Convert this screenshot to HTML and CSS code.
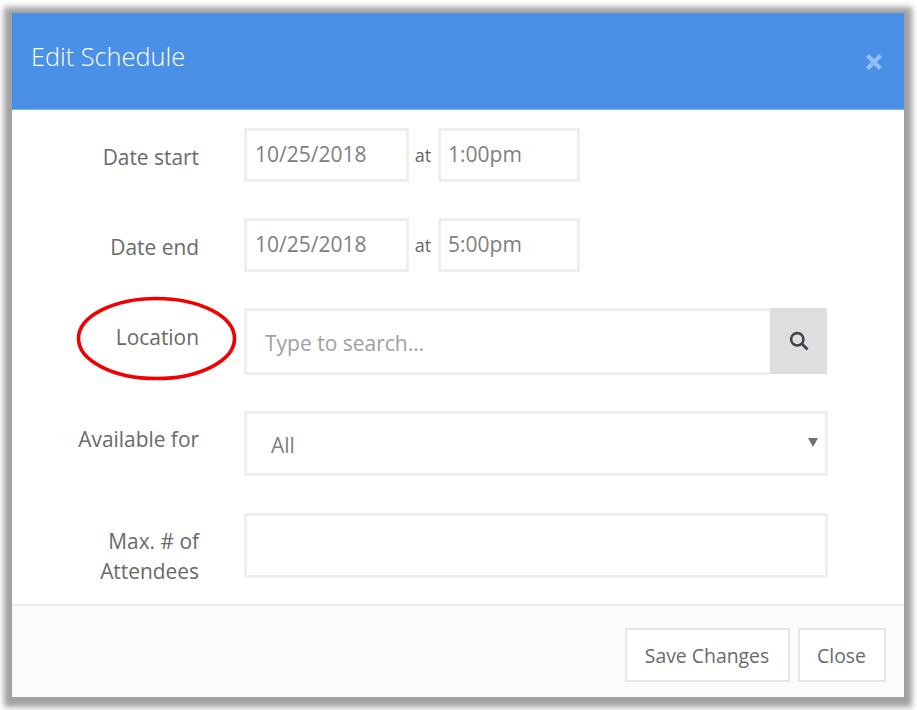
FILE: index.html
```html
<!DOCTYPE html>
<html lang="en">
<head>
<meta charset="utf-8">
<title>Edit Schedule</title>
<link rel="stylesheet" href="styles.css">
</head>
<body>
<div class="modal">
  <header class="modal-header">
    <h1 class="modal-title">Edit Schedule</h1>
    <svg class="close-x" width="18" height="18" viewBox="0 0 18 18" aria-hidden="true"><path d="M2.5 2.5L15.5 15.5M15.5 2.5L2.5 15.5" stroke="#94bdf3" stroke-width="4.2" fill="none"/></svg>
  </header>
  <form class="modal-body">
    <div class="row row-date">
      <label class="label">Date start</label>
      <div class="controls">
        <input class="field field-date" value="10/25/2018">
        <span class="at">at</span>
        <input class="field field-time" value="1:00pm">
      </div>
    </div>
    <div class="row row-date">
      <label class="label">Date end</label>
      <div class="controls">
        <input class="field field-date" value="10/25/2018">
        <span class="at">at</span>
        <input class="field field-time" value="5:00pm">
      </div>
    </div>
    <div class="row row-location">
      <label class="label label-location">Location</label>
      <div class="controls">
        <input class="field field-search" placeholder="Type to search...">
        <span class="search-btn">
          <svg width="20" height="20" viewBox="0 0 20 20" aria-hidden="true"><circle cx="8.3" cy="8.3" r="6.2" stroke="#3f444a" stroke-width="2.6" fill="none"/><path d="M12.8 12.8L18.6 18.4" stroke="#3f444a" stroke-width="2.8" fill="none"/></svg>
        </span>
      </div>
    </div>
    <div class="row row-select">
      <label class="label label-select">Available for</label>
      <div class="controls select-wrap">
        <select class="field field-select"><option>All</option></select>
        <span class="caret"></span>
      </div>
    </div>
    <div class="row row-max">
      <label class="label label-max">Max. # of<br>Attendees</label>
      <div class="controls">
        <input class="field field-wide">
      </div>
    </div>
    <svg class="highlight" width="163" height="87" viewBox="0 0 163 87" aria-hidden="true"><ellipse cx="81.5" cy="42.5" rx="78" ry="40" stroke="#f00000" stroke-width="3.6" fill="none"/></svg>
  </form>
  <footer class="modal-footer">
    <button class="btn btn-save" type="button">Save Changes</button>
    <button class="btn btn-close" type="button">Close</button>
  </footer>
</div>
</body>
</html>
```

FILE: styles.css
```css
* { box-sizing: border-box; }

html, body { margin: 0; height: 100%; background: #fff; }

body {
  padding: 13px 13px 13px 12px;
  font-family: "Open Sans", "Liberation Sans", sans-serif;
  color: #666;
  overflow: hidden;
}

.modal {
  position: relative;
  width: 892px;
  height: 684px;
  display: flex;
  flex-direction: column;
  background: #fff;
  box-shadow: 0 2px 6px 8px #a0a0a0;
}

.modal-header {
  height: 97px;
  flex: none;
  background: #4a90e6;
  border-bottom: 1px solid #7eb0f0;
  display: flex;
  justify-content: space-between;
  padding: 0 21px 0 19px;
}

.modal-title {
  margin: 25px 0 0;
  font-size: 25.3px;
  line-height: 36px;
  font-weight: 300;
  color: #fff;
}

.close-x { margin-top: 40px; }

.modal-body {
  position: relative;
  flex: 1;
  min-height: 0;
  padding: 18px 0 0;
}

.row {
  display: grid;
  grid-template-columns: 187px 584px;
  column-gap: 45px;
  margin-bottom: 36px;
}

.row-select { margin-bottom: 37px; }
.row-max { margin-bottom: 0; }

.label {
  text-align: right;
  font-size: 20.9px;
  line-height: 30px;
  color: #6a6a6a;
  padding-top: 14px;
}

.label-location { padding-top: 14px; }
.label-select { padding-top: 13px; }
.label-max { padding-top: 13px; }

.controls {
  display: flex;
  align-items: stretch;
  position: relative;
}

.field {
  border: 3px solid #efefef;
  background: #fff;
  color: #808080;
  font-family: inherit;
  font-size: 21px;
  outline: none;
  margin: 0;
  border-radius: 0;
}

.field::placeholder { color: #a0a0a0; opacity: 1; }

.row-date .field { height: 54px; padding: 0 8px 3px; }
.row-date .field-time { padding-left: 7px; }
.field-date { width: 165px; }
.field-time { width: 142px; }

.at {
  width: 29px;
  padding-right: 1px;
  text-align: center;
  font-size: 18px;
  line-height: 54px;
  color: #666;
}

.field-search {
  width: 526px;
  height: 67px;
  padding: 2px 18px 0;
  border-right: 0;
}

.search-btn {
  width: 57px;
  height: 66px;
  background: #dedede;
  display: flex;
  align-items: center;
  justify-content: center;
}

.field-select {
  width: 584px;
  height: 65px;
  padding: 2px 24px 0;
  appearance: none;
  -webkit-appearance: none;
}

.caret {
  position: absolute;
  right: 10px;
  top: 27px;
  width: 0;
  height: 0;
  border-left: 5px solid transparent;
  border-right: 5px solid transparent;
  border-top: 9px solid #707070;
}

.field-wide { width: 584px; height: 65px; }

.highlight {
  position: absolute;
  left: 63px;
  top: 186px;
}

.modal-footer {
  height: 93px;
  flex: none;
  background: #fbfbfb;
  border-top: 2px solid #ececec;
  display: flex;
  justify-content: flex-end;
  gap: 8px;
  padding: 22px 18px 0 0;
}

.btn {
  height: 54px;
  border: 2px solid #e6e6e6;
  background: #fff;
  color: #6a6a6a;
  font-family: inherit;
  font-size: 19.4px;
  padding: 0 1px 0 0;
}

.btn-save { width: 165px; }
.btn-close { width: 88px; }
```
